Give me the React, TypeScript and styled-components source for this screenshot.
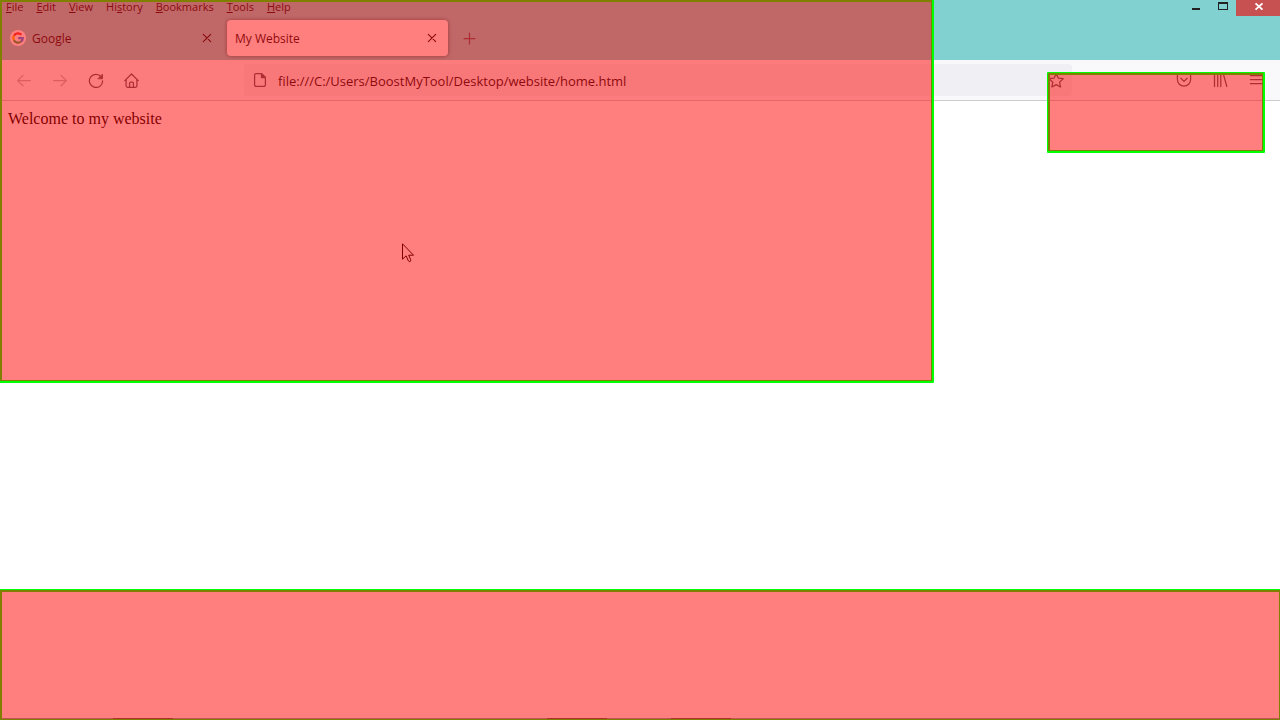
import React from "react";
import styled, { createGlobalStyle, css } from "styled-components";

const GlobalStyle = createGlobalStyle`
  * { box-sizing: border-box; }
  body { margin: 0; background: #fff; }
  button { border: 0; padding: 0; background: none; font: inherit; color: inherit; }
  svg { display: block; flex: none; }
`;

const Screen = styled.div`
  position: relative;
  display: flex;
  flex-direction: column;
  min-height: 100vh;
  overflow: hidden;
  color: #15141a;
  font-family: "Open Sans", "Noto Sans", sans-serif;
  font-size: 12px;
`;

const TitleArea = styled.header`
  background: #81d1d1;
`;

const TopRow = styled.div`
  display: flex;
  justify-content: space-between;
  height: 16px;
`;

const MenuBar = styled.nav`
  display: flex;
  align-items: flex-start;
  gap: 1px;
`;

const MenuItem = styled.button`
  padding: 0 6px;
  font-size: 11px;
  line-height: 13px;
`;

const WindowControls = styled.div`
  display: flex;
`;

const WindowButton = styled.button<{ $close?: boolean }>`
  display: flex;
  justify-content: center;
  width: ${(p) => (p.$close ? 44 : 27)}px;
  height: 16px;
  background: ${(p) => (p.$close ? "#c75050" : "transparent")};
`;

const TabStrip = styled.div`
  display: flex;
  align-items: center;
  gap: 4px;
  height: 44px;
  padding: 0 2px;
`;

const Tab = styled.div<{ $active?: boolean }>`
  display: flex;
  align-items: center;
  gap: 6px;
  width: 221px;
  height: 36px;
  padding: 0 8px;
  border-radius: 4px;
  ${(p) =>
    p.$active &&
    css`
      background: #fff;
      box-shadow: 0 0 4px rgba(0, 0, 0, 0.5);
    `}
`;

const TabLabel = styled.span`
  flex: 1;
  padding-top: 2px;
  line-height: 18px;
`;

const IconButton = styled.button<{ $size?: number }>`
  display: flex;
  align-items: center;
  justify-content: center;
  flex: none;
  width: ${(p) => p.$size ?? 36}px;
  height: ${(p) => p.$size ?? 36}px;
  color: #5b5b66;
  &:disabled { opacity: 0.4; }
`;

const CloseTab = styled(IconButton)`
  color: #15141a;
`;

const Toolbar = styled.div`
  display: flex;
  align-items: center;
  height: 41px;
  padding: 0 6px;
  background: #f9f9fb;
  border-bottom: 1px solid #ccc;
`;

const Spring = styled.div`
  flex: 94 1 0;
`;

const AddressBar = styled.label`
  display: flex;
  align-items: center;
  gap: 10px;
  flex: 812 1 0;
  height: 32px;
  padding: 0 8px;
  border-radius: 4px;
  background: #f0f0f4;
  color: #5b5b66;
`;

const AddressInput = styled.input`
  flex: 1;
  min-width: 0;
  padding: 2px 0 0;
  border: 0;
  outline: 0;
  background: none;
  color: #15141a;
  font: 13px/20px "Open Sans", "Noto Sans", sans-serif;
`;

const Document = styled.main`
  flex: 1;
  padding: 8px;
  background: #fff;
  color: #000;
  font: 16px/20px "Liberation Serif", "Times New Roman", serif;
`;

const Paragraph = styled.p`
  margin: 0;
`;

const Taskbar = styled.footer`
  display: flex;
  height: 2px;
  background: #81a8a8;
`;

const TaskMark = styled.i<{ $gap: number }>`
  width: 60px;
  margin-left: ${(p) => p.$gap}px;
  background: #606060;
`;

const Pointer = styled.svg`
  position: absolute;
  left: 402px;
  top: 243px;
`;

const Highlight = styled.div`
  position: absolute;
  border: 3px solid #0f0;
  border-radius: 1px;
  pointer-events: none;
  &::after {
    content: "";
    position: absolute;
    inset: -2px -1px -1px -2px;
    background: rgba(255, 0, 0, 0.5);
  }
`;

const WindowHighlight = styled(Highlight)`
  left: -1px;
  top: -1px;
  width: 935px;
  height: 384px;
`;

const ToolsHighlight = styled(Highlight)`
  right: 15px;
  top: 72px;
  width: 218px;
  height: 81px;
`;

const BottomHighlight = styled(Highlight)`
  left: -1px;
  right: -2px;
  bottom: -2px;
  height: 133px;
`;

const Icon = ({ children, weight = 1.25 }: { children: React.ReactNode; weight?: number }) => (
  <svg
    width="16"
    height="16"
    viewBox="0 0 16 16"
    fill="none"
    stroke="currentColor"
    strokeWidth={weight}
    strokeLinecap="round"
    strokeLinejoin="round"
    aria-hidden="true"
  >
    {children}
  </svg>
);

const GoogleIcon = () => (
  <svg width="16" height="16" viewBox="0 0 16 16" aria-hidden="true">
    <circle cx="8" cy="8" r="8" fill="#fff" />
    <g fill="none" strokeWidth="2.3">
      <path d="M3.9 5.7A4.7 4.7 0 0 1 11.4 4.8" stroke="#ea4335" />
      <path d="M3.9 10.3A4.7 4.7 0 0 1 3.9 5.7" stroke="#fbbc05" />
      <path d="M11.1 11.5A4.7 4.7 0 0 1 3.9 10.3" stroke="#34a853" />
      <path d="M8.2 8.1H12.7A4.7 4.7 0 0 1 11.1 11.5" stroke="#4285f4" />
    </g>
  </svg>
);

const Cross = () => (
  <Icon weight={1.1}>
    <path d="M4.3 4.3l7.4 7.4M11.7 4.3l-7.4 7.4" />
  </Icon>
);

const menus: [string, string, string][] = [
  ["", "F", "ile"],
  ["", "E", "dit"],
  ["", "V", "iew"],
  ["Hi", "s", "tory"],
  ["", "B", "ookmarks"],
  ["", "T", "ools"],
  ["", "H", "elp"],
];

export default function App() {
  return (
    <>
      <GlobalStyle />
      <Screen>
        <TitleArea>
          <TopRow>
            <MenuBar aria-label="Menu bar">
              {menus.map(([before, key, after]) => (
                <MenuItem key={before + key + after}>
                  {before}
                  <u>{key}</u>
                  {after}
                </MenuItem>
              ))}
            </MenuBar>
            <WindowControls>
              <WindowButton aria-label="Minimize">
                <svg width="27" height="16" viewBox="0 0 27 16">
                  <path d="M10 8h8v2h-8z" fill="#222" />
                </svg>
              </WindowButton>
              <WindowButton aria-label="Maximize">
                <svg width="27" height="16" viewBox="0 0 27 16">
                  <path d="M9 2h10v8H9zM10 4v5h8V4z" fill="#222" fillRule="evenodd" />
                </svg>
              </WindowButton>
              <WindowButton $close aria-label="Close">
                <svg width="44" height="16" viewBox="0 0 44 16">
                  <path d="M19.5 3.3l7 6.4M26.5 3.3l-7 6.4" stroke="#fff" strokeWidth="1.8" />
                </svg>
              </WindowButton>
            </WindowControls>
          </TopRow>
          <TabStrip>
            <Tab>
              <GoogleIcon />
              <TabLabel>Google</TabLabel>
              <CloseTab $size={16} aria-label="Close Google">
                <Cross />
              </CloseTab>
            </Tab>
            <Tab $active>
              <TabLabel>My Website</TabLabel>
              <CloseTab $size={16} aria-label="Close My Website">
                <Cross />
              </CloseTab>
            </Tab>
            <IconButton aria-label="New tab">
              <Icon>
                <path d="M7.5 3v11M2 8.5h11" />
              </Icon>
            </IconButton>
          </TabStrip>
        </TitleArea>
        <Toolbar>
          <IconButton disabled aria-label="Back">
            <Icon>
              <path d="M14.4 8.6H1.8M7 3.4L1.6 8.6 7 13.8" />
            </Icon>
          </IconButton>
          <IconButton disabled aria-label="Forward">
            <Icon>
              <path d="M1.6 8.6h12.6M9 3.4l5.4 5.2L9 13.8" />
            </Icon>
          </IconButton>
          <IconButton aria-label="Reload">
            <Icon>
              <path d="M13.2 4.8A6.6 6.6 0 1 0 14.6 8.8" />
              <path d="M14.5 2.4v4.4h-4.4z" fill="currentColor" strokeWidth="0.8" />
            </Icon>
          </IconButton>
          <IconButton aria-label="Home">
            <Icon>
              <path d="M.8 8.6L7.5 2l6.7 6.6M2.1 7.6v6.2a1.5 1.5 0 0 0 1.5 1.5h7.8a1.5 1.5 0 0 0 1.5-1.5V7.6M5.6 15.2v-4a1 1 0 0 1 1-1h1.8a1 1 0 0 1 1 1v4" />
            </Icon>
          </IconButton>
          <Spring />
          <AddressBar>
            <Icon>
              <path d="M9.5 1.6H4.1a1.5 1.5 0 0 0-1.5 1.5v9.8a1.5 1.5 0 0 0 1.5 1.5h7.8a1.5 1.5 0 0 0 1.5-1.5V5.5z" />
              <path d="M9.5 1.6v3.9h3.9z" fill="currentColor" />
            </Icon>
            <AddressInput
              aria-label="Address"
              defaultValue="file:///C:/Users/BoostMyTool/Desktop/website/home.html"
            />
            <IconButton $size={16} aria-label="Bookmark this page">
              <Icon>
                <path d="M8.2 1.7l2.1 4.4 4.9.6-3.6 3.4.9 4.9-4.3-2.4L3.9 15l.9-4.9-3.6-3.4 4.9-.6z" />
              </Icon>
            </IconButton>
          </AddressBar>
          <Spring />
          <IconButton aria-label="Save to Pocket">
            <Icon>
              <path d="M2.9 2h10.2a1.5 1.5 0 0 1 1.5 1.5v4.1a6.6 6.6 0 0 1-13.2 0V3.5A1.5 1.5 0 0 1 2.9 2z" />
              <path d="M4.8 6.3L8 9.4l3.2-3.1" />
            </Icon>
          </IconButton>
          <IconButton aria-label="Library">
            <Icon>
              <path d="M2.5 2.6v12M5.7 2.6v12M8.8 2.6v12M11.6 2.8l3.2 11.7" />
            </Icon>
          </IconButton>
          <IconButton aria-label="Application menu">
            <Icon>
              <path d="M2.4 3.5h12M2.4 7.6h12M2.4 11.7h12" />
            </Icon>
          </IconButton>
        </Toolbar>
        <Document>
          <Paragraph>Welcome to my website</Paragraph>
        </Document>
        <Taskbar>
          <TaskMark $gap={113} />
          <TaskMark $gap={374} />
          <TaskMark $gap={64} />
        </Taskbar>
        <Pointer width="13" height="21" viewBox="0 0 13 21" aria-hidden="true">
          <path
            d="M.5.8v15.4l3.6-3.4 2.2 5c.8 1.6 3 .7 2.4-1l-2-4.6h4.8z"
            fill="#fff"
            stroke="#000"
            strokeWidth="1"
          />
        </Pointer>
        <WindowHighlight />
        <ToolsHighlight />
        <BottomHighlight />
      </Screen>
    </>
  );
}
